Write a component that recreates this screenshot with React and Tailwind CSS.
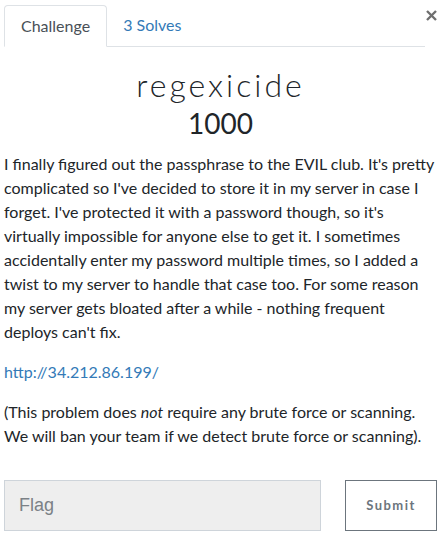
export default function App() {
  return (
    <div
      className="min-h-screen bg-white pt-[5px] pl-[4px] pr-[10px] text-[#212529]"
      style={{ fontFamily: "Lato, 'Noto Sans', sans-serif" }}
    >
      <div className="flex items-start">
        <ul className="flex flex-1 border-b border-[#dee2e6] text-[16px] leading-[24px]">
          <li className="-mb-px rounded-t-[4px] border border-[#dee2e6] border-b-white bg-white px-4 py-2 text-[#495057]">
            Challenge
          </li>
          <li className="px-4 py-2 text-[#337ab7]">3 Solves</li>
        </ul>
        <button className="mt-[5px] ml-px flex h-[11px] w-[11px] items-center justify-center">
          <svg width="11" height="11" viewBox="0 0 11 11">
            <path d="M1 1 L10 10 M10 1 L1 10" stroke="#6f6f6f" strokeWidth="2.4" />
          </svg>
        </button>
      </div>

      <h2 className="mt-[18px] text-center text-[32px] leading-[40px] font-light tracking-[3px] text-[#212529]">
        regexicide
      </h2>
      <h3 className="text-center text-[28px] leading-[36px] text-[#212529]">1000</h3>

      <div className="mt-[11px] text-[16px] leading-[24px]">
        <p className="mb-4">
          I finally figured out the passphrase to the EVIL club. It's pretty complicated so I've
          decided to store it in my server in case I forget. I've protected it with a password
          though, so it's virtually impossible for anyone else to get it. I sometimes accidentally
          enter my password multiple times, so I added a twist to my server to handle that case
          too. For some reason my server gets bloated after a while - nothing frequent deploys
          can't fix.
        </p>
        <p className="mb-4">
          <a href="#" className="text-[#337ab7]">
            http://34.212.86.199/
          </a>
        </p>
        <p>
          (This problem does <em>not</em> require any brute force or scanning. We will ban your
          team if we detect brute force or scanning).
        </p>
      </div>

      <div className="mt-[32px] flex gap-[24px]">
        <input
          placeholder="Flag"
          className="h-[51px] flex-1 border border-[#ced4da] bg-[#eeeeee] pl-[14px] text-[18px] placeholder:text-[#7b8186] outline-none"
          style={{ fontFamily: "'Liberation Sans', Arial, sans-serif" }}
        />
        <button className="h-[51px] w-[92px] border border-[#6c757d] bg-white text-[13px] font-bold tracking-[1.5px] text-[#6c757d]">
          Submit
        </button>
      </div>
    </div>
  );
}
